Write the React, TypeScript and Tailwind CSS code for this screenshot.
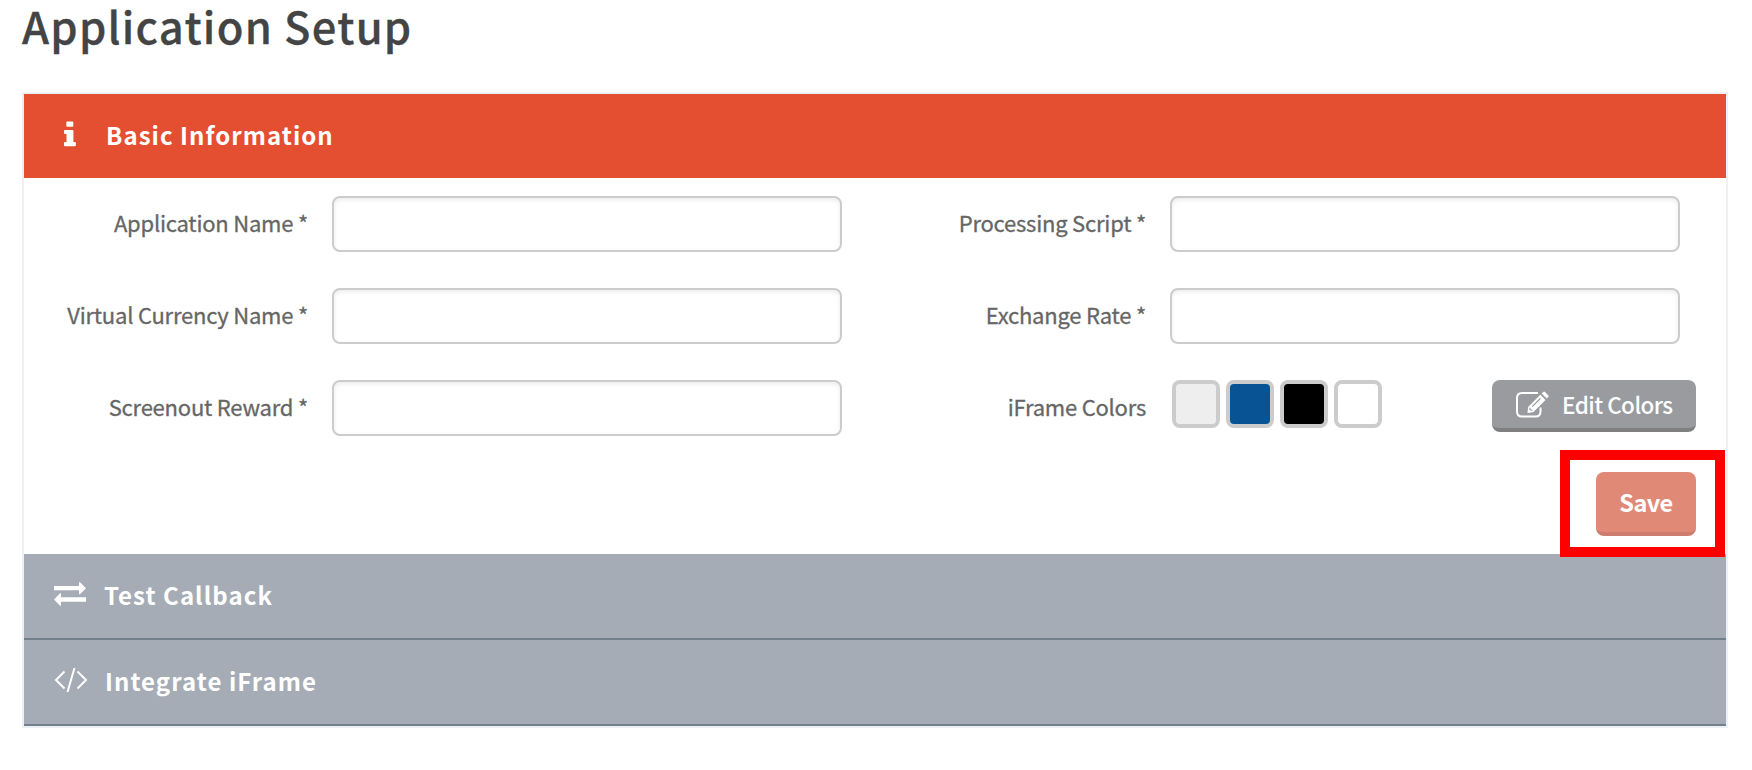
import type { ReactNode } from "react";

function InfoIcon() {
  return (
    <svg className="mb-[5px] ml-[40px] h-[26px] w-[12px] shrink-0" viewBox="0 0 12 26" fill="#fff">
      <path d="M3.2 0.6h5.2q.9 0 .9 1v3.2q0 1-.9 1H3.2q-.9 0-.9-1V1.600q0-1 .9-1zM1 9h7.400q1 0 1 1v11h1.500q1 0 1 1v2.200q0 1-1 1H1q-1 0-1-1V22q0-1 1-1h1.500v-8H1q-1 0-1-1v-2q0-1 1-1z" />
    </svg>
  );
}

function ExchangeIcon() {
  return (
    <svg className="mb-[4px] ml-[30px] h-[24px] w-[32px] shrink-0" viewBox="0 0 32 24" fill="#fff">
      <path d="M0 4h25V0.200h1L32 6.300 26 12.300h-1V8.300H0z" />
      <path d="M32 19.700H7v4H6L0 17.500 6 11.300h1v4h25z" />
    </svg>
  );
}

function CodeIcon() {
  return (
    <svg className="mb-[4px] ml-[30px] h-[26px] w-[34px] shrink-0" viewBox="0 0 34 26" fill="none" stroke="#fff" strokeWidth="2">
      <path d="M10.500 4.500L2 13l8.500 8.500M23.500 4.500L32 13l-8.500 8.500M20.500 1L13.500 25" />
    </svg>
  );
}

function EditIcon() {
  return (
    <svg className="h-[27px] w-[33px] shrink-0" viewBox="0 0 33 27" fill="none">
      <path d="M22 2H6Q1 2 1 7v13.500q0 5 5 5h13.500q5 0 5-5V16.500" stroke="#fff" strokeWidth="2" />
      <path d="M24.300 3.800l5.200 5.200L17.200 21.300l-5.700.6.600-5.900z" fill="#fff" />
      <path d="M25.600 2.500l1.600-1.600q.9-.7 1.800.1l3.200 3.200q.8.9 0 1.800l-1.500 1.600z" fill="#fff" />
      <path d="M16.200 15.700l8.200-8.200M13.800 16.600l.3 2.200 2.200.4" stroke="#97999d" strokeWidth="1.100" />
    </svg>
  );
}

function SectionHeader({ icon, title, tone, gap }: { icon: ReactNode; title: string; tone: string; gap: string }) {
  return (
    <div className={`flex items-center ${tone} ${gap}`}>
      {icon}
      <h2 className="pb-[3px] text-[24px] leading-[81px] font-bold tracking-[1.05px] whitespace-nowrap text-white">{title}</h2>
    </div>
  );
}

function Label({ children }: { children: ReactNode }) {
  return (
    <label className="h-[56px] pr-[24px] text-right text-[22px] leading-[52px] tracking-[-0.22px] whitespace-nowrap text-[#666] [-webkit-text-stroke:0.3px_#666]">
      {children}
    </label>
  );
}

function Field({ label }: { label: string }) {
  return (
    <>
      <Label>{label}</Label>
      <input
        aria-label={label}
        className="h-[56px] w-[510px] rounded-[8px] border-2 border-[#ccc] bg-white px-3 shadow-[inset_0_2px_4px_rgba(0,0,0,0.08)] outline-none"
      />
    </>
  );
}

function Swatch({ color }: { color: string }) {
  return <span className={`size-[48px] rounded-[8px] border-4 border-[#ccc] ${color}`} />;
}

export default function App() {
  return (
    <main className="h-[770px] w-[1752px] bg-white pl-[22px] font-['Noto_Sans_CJK_SC',sans-serif]">
      <h1 className="h-[92px] text-[43.500px] leading-[52px] font-medium tracking-[1.25px] whitespace-nowrap text-[#444] [-webkit-text-stroke:0.3px_#444]">
        Application Setup
      </h1>
      <section className="w-[1706px] border-2 border-[#edf1f5]">
        <SectionHeader icon={<InfoIcon />} title="Basic Information" tone="h-[84px] bg-[#e44f31]" gap="gap-[30px]" />
        <div className="h-[376px] pt-[18px]">
          <div className="grid grid-cols-[308px_510px_328px_510px] gap-y-[36px]">
            <Field label="Application Name *" />
            <Field label="Processing Script *" />
            <Field label="Virtual Currency Name *" />
            <Field label="Exchange Rate *" />
            <Field label="Screenout Reward *" />
            <Label>iFrame Colors</Label>
            <div className="flex w-[526px] items-start gap-[6px] pl-[2px]">
              <Swatch color="bg-[#eee]" />
              <Swatch color="bg-[#085394]" />
              <Swatch color="bg-black" />
              <Swatch color="bg-white" />
              <button className="ml-auto flex h-[52px] w-[204px] items-center gap-[13px] rounded-[8px] border-b-4 border-[#808080] bg-[#999b9f] pl-[24px] text-[22.500px] leading-[44px] tracking-[-0.55px] whitespace-nowrap text-white">
                <EditIcon />
                <span className="font-medium">Edit Colors</span>
              </button>
            </div>
          </div>
          <div className="relative mt-[14px] mr-[1px] ml-auto h-[107px] w-[165px] border-[10px] border-[#f00] pt-[12px] pl-[26px]">
            <button className="h-[64px] w-[100px] rounded-[8px] border-b-4 border-[#cd7c6d] bg-[#e18977] text-[23.500px] leading-[56px] font-bold tracking-[-0.5px] text-white">
              Save
            </button>
          </div>
        </div>
        <SectionHeader icon={<ExchangeIcon />} title="Test Callback" tone="h-[86px] border-b-2 border-[#71808b] bg-[#a5acb5]" gap="gap-[18px]" />
        <SectionHeader icon={<CodeIcon />} title="Integrate iFrame" tone="h-[86px] border-b-2 border-[#71808b] bg-[#a5acb5]" gap="gap-[17px]" />
      </section>
    </main>
  );
}
